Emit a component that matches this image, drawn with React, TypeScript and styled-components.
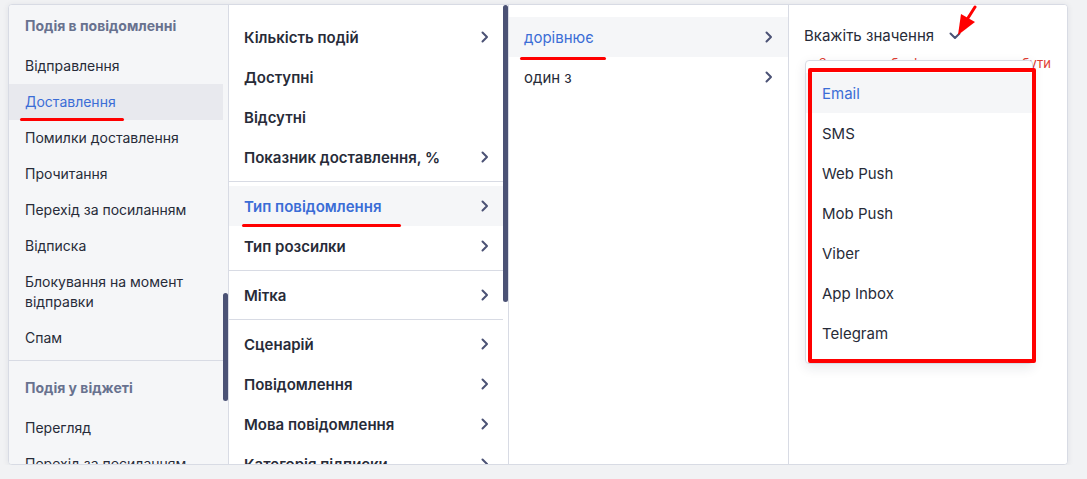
import styled, { createGlobalStyle } from 'styled-components';

const GlobalStyle = createGlobalStyle`
  body {
    margin: 0;
    background: #f1f2f4;
    font-family: Inter, 'Noto Sans', sans-serif;
    color: #272b38;
  }
`;

const Panel = styled.div`
  box-sizing: border-box;
  margin: 4px 0 0 8px;
  width: 1060px;
  height: 461px;
  display: grid;
  grid-template-columns: 220px 280px 280px 1fr;
  background: #fff;
  border: 1px solid #d8dbe4;
  border-radius: 4px;
  box-shadow: 0 1px 6px rgba(30, 40, 70, 0.08);
  overflow: hidden;
`;

const Column = styled.div<{ $tint?: boolean; $last?: boolean }>`
  position: relative;
  display: flex;
  min-height: 0;
  overflow: hidden;
  background: ${(p) => (p.$tint ? '#f5f6f8' : '#fff')};
  border-right: ${(p) => (p.$last ? 'none' : '1px solid #d8dbe4')};
`;

const List = styled.div<{ $top?: number }>`
  flex: 1;
  min-width: 0;
  padding-top: ${(p) => p.$top ?? 0}px;
`;

const Track = styled.div`
  width: 5px;
  flex-shrink: 0;
`;

const Thumb = styled.div<{ $top: number; $height: number }>`
  margin-top: ${(p) => p.$top}px;
  height: ${(p) => p.$height}px;
  background: #4b5275;
  border-radius: 3px;
`;

const EventGroup = styled.div`
  padding-bottom: 4px;

  & + & {
    border-top: 1px solid #d8dbe4;
    padding-top: 6px;
  }
`;

const GroupTitle = styled.div`
  padding: 11px 16px 12px;
  font-size: 14px;
  line-height: 20px;
  font-weight: 700;
  color: #68728f;
`;

const EventItem = styled.div<{ $active?: boolean }>`
  position: relative;
  padding: 8px 16px;
  font-size: 14px;
  line-height: 20px;
  background: ${(p) => (p.$active ? '#e8e9ee' : 'transparent')};
  color: ${(p) => (p.$active ? '#3b6dd6' : '#272b38')};
`;

const FieldGroup = styled.div`
  padding: 4px 0;

  & + & {
    border-top: 1px solid #d8dbe4;
  }
`;

const Row = styled.div<{ $active?: boolean; $strong?: boolean; $right?: number }>`
  position: relative;
  display: flex;
  align-items: center;
  justify-content: space-between;
  height: 40px;
  padding: 0 ${(p) => p.$right ?? 14}px 0 15px;
  font-size: 15px;
  font-weight: ${(p) => (p.$strong ? 600 : 400)};
  background: ${(p) => (p.$active ? '#f5f6f8' : 'transparent')};
  color: ${(p) => (p.$active ? '#3b6dd6' : '#272b38')};
  white-space: nowrap;
`;

// red marker strokes under the chosen path
const Underline = styled.span<{ $left: number; $width: number; $bottom: number }>`
  position: absolute;
  left: ${(p) => p.$left}px;
  bottom: ${(p) => p.$bottom}px;
  width: ${(p) => p.$width}px;
  height: 3px;
  border-radius: 2px;
  background: #ff0000;
`;

const ValuePane = styled.div`
  flex: 1;
  position: relative;
  padding: 21px 16px 0 15px;
`;

const ValueTrigger = styled.div`
  display: flex;
  align-items: center;
  gap: 15px;
  font-size: 15px;
  line-height: 20px;
  color: #272b38;
`;

const ErrorText = styled.div`
  margin-top: 9px;
  font-size: 13px;
  line-height: 16px;
  color: #e03c31;
  text-align: right;
  white-space: nowrap;
`;

const Dropdown = styled.div`
  position: absolute;
  top: 55px;
  left: 16px;
  width: 228px;
  box-sizing: border-box;
  padding: 12px 0 10px;
  background: #fff;
  border: 1px solid #d8dbe4;
  border-radius: 4px;
  box-shadow: 0 4px 12px rgba(30, 40, 70, 0.1);
`;

const Option = styled.div<{ $active?: boolean }>`
  display: flex;
  align-items: center;
  height: 40px;
  padding: 0 16px;
  font-size: 15px;
  background: ${(p) => (p.$active ? '#f5f6f8' : 'transparent')};
  color: ${(p) => (p.$active ? '#3b6dd6' : '#272b38')};
`;

const Frame = styled.div`
  position: absolute;
  left: 2px;
  top: 7px;
  width: 228px;
  height: 295px;
  box-sizing: border-box;
  border: 4px solid #ff0000;
  border-radius: 2px;
  pointer-events: none;
`;

const Pointer = styled.svg`
  position: absolute;
  left: 164px;
  top: 0;
`;

const Chevron = () => (
  <svg width="8" height="12" viewBox="0 0 8 12">
    <path d="M1.5 1.5 6 6l-4.5 4.5" fill="none" stroke="#4b5275" strokeWidth="2" strokeLinecap="round" strokeLinejoin="round" />
  </svg>
);

const ChevronDown = () => (
  <svg width="12" height="8" viewBox="0 0 12 8">
    <path d="M1.5 1.5 6 6l4.5-4.5" fill="none" stroke="#4b5275" strokeWidth="2" strokeLinecap="round" strokeLinejoin="round" />
  </svg>
);

const messageEvents = [
  'Відправлення',
  'Доставлення',
  'Помилки доставлення',
  'Прочитання',
  'Перехід за посиланням',
  'Відписка',
  'Блокування на момент відправки',
  'Спам',
];

const widgetEvents = ['Перегляд', 'Перехід за посиланням'];

type Field = { label: string; nested?: boolean };

const fieldGroups: Field[][] = [
  [
    { label: 'Кількість подій', nested: true },
    { label: 'Доступні' },
    { label: 'Відсутні' },
    { label: 'Показник доставлення, %', nested: true },
  ],
  [
    { label: 'Тип повідомлення', nested: true },
    { label: 'Тип розсилки', nested: true },
  ],
  [{ label: 'Мітка', nested: true }],
  [
    { label: 'Сценарій', nested: true },
    { label: 'Повідомлення', nested: true },
    { label: 'Мова повідомлення', nested: true },
    { label: 'Категорія підписки', nested: true },
  ],
];

const channels = ['Email', 'SMS', 'Web Push', 'Mob Push', 'Viber', 'App Inbox', 'Telegram'];

export default function App() {
  return (
    <>
      <GlobalStyle />
      <Panel>
        <Column $tint>
          <List>
            <EventGroup>
              <GroupTitle>Подія в повідомленні</GroupTitle>
              {messageEvents.map((name) => (
                <EventItem key={name} $active={name === 'Доставлення'}>
                  {name === 'Блокування на момент відправки' ? (
                    <>
                      Блокування на момент
                      <br />
                      відправки
                    </>
                  ) : (
                    name
                  )}
                  {name === 'Доставлення' && <Underline $left={11} $width={104} $bottom={-1} />}
                </EventItem>
              ))}
            </EventGroup>
            <EventGroup>
              <GroupTitle>Подія у віджеті</GroupTitle>
              {widgetEvents.map((name) => (
                <EventItem key={name}>{name}</EventItem>
              ))}
            </EventGroup>
          </List>
          <Track>
            <Thumb $top={288} $height={108} />
          </Track>
        </Column>

        <Column>
          <List $top={8}>
            {fieldGroups.map((group, i) => (
              <FieldGroup key={i}>
                {group.map((field) => {
                  const active = field.label === 'Тип повідомлення';
                  return (
                    <Row key={field.label} $strong $active={active}>
                      {field.label}
                      {field.nested && <Chevron />}
                      {active && <Underline $left={13} $width={159} $bottom={-1} />}
                    </Row>
                  );
                })}
              </FieldGroup>
            ))}
          </List>
          <Track>
            <Thumb $top={0} $height={297} />
          </Track>
        </Column>

        <Column>
          <List $top={12}>
            <Row $active $right={15}>
              дорівнює
              <Chevron />
              <Underline $left={11} $width={86} $bottom={-3} />
            </Row>
            <Row $right={15}>
              один з
              <Chevron />
            </Row>
          </List>
        </Column>

        <Column $last>
          <ValuePane>
            <ValueTrigger>
              Вкажіть значення
              <ChevronDown />
            </ValueTrigger>
            <ErrorText>Значення обов'язково повинно бути</ErrorText>
            <Dropdown>
              {channels.map((c) => (
                <Option key={c} $active={c === 'Email'}>
                  {c}
                </Option>
              ))}
              <Frame />
            </Dropdown>
            <Pointer width="26" height="34" viewBox="0 0 26 34">
              <path d="M22 2 15 13" stroke="#ff0000" strokeWidth="3" strokeLinecap="round" />
              <path d="M8 9 22 17 5 30Z" fill="#ff0000" />
            </Pointer>
          </ValuePane>
        </Column>
      </Panel>
    </>
  );
}
